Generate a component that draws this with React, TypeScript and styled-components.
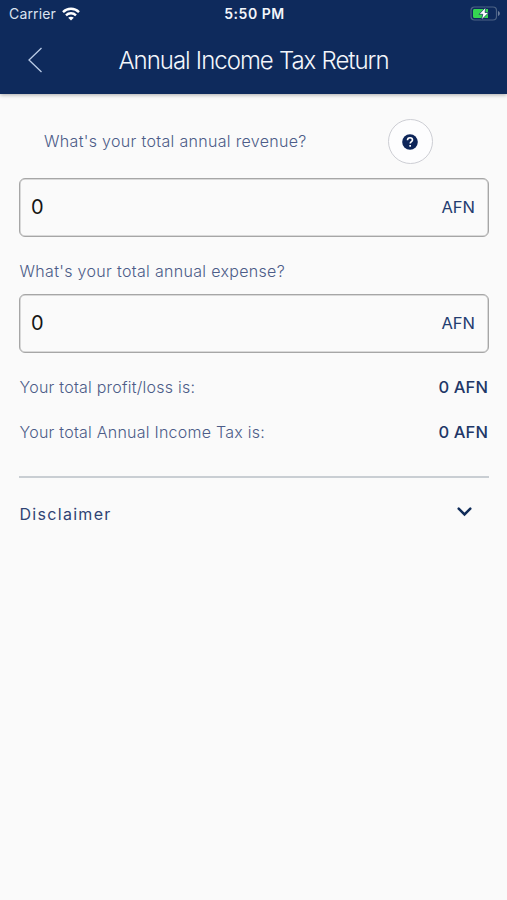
import React, { useState } from "react";
import styled, { createGlobalStyle } from "styled-components";

const GlobalStyle = createGlobalStyle`
  * { box-sizing: border-box; }
  body {
    margin: 0;
    background: #fafafa;
    font-family: Inter, "Liberation Sans", sans-serif;
  }
`;

const Screen = styled.div`
  display: flex;
  flex-direction: column;
  min-height: 900px;
  background: #fafafa;
  color: #4c5c88;
`;

const Header = styled.header`
  height: 94px;
  background: #0e2a5c;
  color: #f3f6fb;
  box-shadow: 0 1px 4px rgba(0, 0, 0, 0.32);
`;

const StatusBar = styled.div`
  display: grid;
  grid-template-columns: 1fr auto 1fr;
  align-items: center;
  height: 27px;
  padding: 0 7px 0 9px;
  font-size: 14px;
  line-height: 17px;
`;

const Carrier = styled.div`
  display: flex;
  align-items: center;
  gap: 6px;
  letter-spacing: 0.15px;
  color: #dbe3f0;
`;

const Clock = styled.div`
  font-weight: 600;
  letter-spacing: 0.55px;
`;

const BatterySlot = styled.div`
  display: flex;
  justify-content: flex-end;
`;

const NavBar = styled.div`
  display: grid;
  grid-template-columns: 72px 1fr 72px;
  align-items: center;
  height: 66px;
`;

const BackButton = styled.button`
  display: flex;
  padding: 0 0 0 27px;
  border: 0;
  background: none;
  color: #b9cbe6;
`;

const Title = styled.h1`
  margin: 0;
  padding-top: 2px;
  text-align: center;
  white-space: nowrap;
  font-size: 24px;
  line-height: 30px;
  font-weight: 300;
  letter-spacing: -1px;
  word-spacing: 0.4px;
`;

const Content = styled.main`
  display: flex;
  flex-direction: column;
  padding: 25px 18px 0 19px;
`;

const QuestionRow = styled.div`
  display: flex;
  align-items: center;
  justify-content: space-between;
  height: 45px;
  padding: 0 56px 0 25px;
  margin-bottom: 14px;
`;

const Label = styled.label`
  padding-bottom: 2px;
  font-size: 16px;
  line-height: 20px;
  font-weight: 300;
  letter-spacing: 0.32px;
  white-space: nowrap;
`;

const HelpButton = styled.button`
  display: flex;
  align-items: center;
  justify-content: center;
  width: 45px;
  height: 45px;
  padding: 0 1px 0 0;
  border: 1px solid #cdced4;
  border-radius: 50%;
  background: #fdfdfe;
`;

const Field = styled.div`
  display: flex;
  align-items: center;
  height: 59px;
  padding: 0 13px 2px 11px;
  border: 1px solid #a6a6a6;
  border-radius: 6px;
  box-shadow: inset 0 0 0 0.5px #b8b8b8;
`;

const AmountInput = styled.input`
  flex: 1;
  min-width: 0;
  padding: 0;
  border: 0;
  outline: 0;
  background: transparent;
  font-family: inherit;
  font-size: 20px;
  line-height: 24px;
  color: #151515;
`;

const Currency = styled.span`
  font-size: 16.5px;
  line-height: 20px;
  color: #233c70;
`;

const ExpenseLabel = styled(Label)`
  padding: 0 0 0 0.5px;
  margin: 24px 0 13px;
`;

const ResultRow = styled.div`
  display: flex;
  align-items: center;
  justify-content: space-between;
  height: 45px;
  padding: 0 1px 0 0.5px;
`;

const ResultLabel = styled.span`
  padding-bottom: 2px;
  font-size: 16px;
  line-height: 20px;
  font-weight: 300;
  letter-spacing: 0.24px;
  white-space: nowrap;
`;

const Results = styled.div`
  padding: 12px 0 21px;
  border-bottom: 2px solid #c9ced3;
`;

const ResultValue = styled.span`
  padding-bottom: 2px;
  font-size: 16.5px;
  line-height: 20px;
  font-weight: 500;
  letter-spacing: 0.1px;
  color: #213767;
`;

const Disclosure = styled.button`
  display: flex;
  align-items: center;
  justify-content: space-between;
  height: 71px;
  padding: 0 17px 0 0.5px;
  border: 0;
  background: none;
  font-family: inherit;
  font-size: 16px;
  letter-spacing: 1.3px;
  color: #2f4374;
`;

const WifiIcon = () => (
  <svg width="18" height="14" viewBox="0 0 18 14" fill="none" stroke="#fff" strokeWidth="2.4">
    <path d="M1 5.1C5.4.7 12.6.7 17 5.1" />
    <path d="M4 8.3c2.8-2.7 7.2-2.7 10 0" />
    <path d="M9 13.6 6.2 10.8c1.6-1.4 4-1.4 5.600 0Z" fill="#fff" stroke="none" />
  </svg>
);

const BatteryIcon = () => (
  <svg width="30" height="15" viewBox="0 0 30 15">
    <rect x="1" y="1" width="25.500" height="13" rx="3.500" fill="none" stroke="#4d6385" strokeWidth="1.200" />
    <path d="M28 5v5c1.300-.5 1.800-1.400 1.800-2.500S29.300 5.500 28 5Z" fill="#6d7f9c" />
    <path d="M4.500 3H18v9H4.500C3.600 12 3 11.400 3 10.500V4.500C3 3.600 3.600 3 4.500 3Z" fill="#35d551" />
    <path d="M15.800 1.200 9 8.300h3.800L11.400 14 18.800 6.500H15Z" fill="#fff" stroke="#0e2a5c" strokeWidth=".7" />
  </svg>
);

const BackIcon = () => (
  <svg width="16" height="26" viewBox="0 0 16 26" fill="none" stroke="currentColor" strokeWidth="1.300">
    <path d="M14.500 1 2 13l12.500 12" />
  </svg>
);

const HelpIcon = () => (
  <svg width="16" height="16" viewBox="0 0 16 16" fill="none">
    <circle cx="8" cy="8" r="7.800" fill="#0d2559" />
    <path d="M5.500 6.300C5.500 4.600 6.600 3.700 8 3.700s2.500.9 2.500 2.300c0 1.700-2.300 1.800-2.300 3.600" stroke="#fff" strokeWidth="1.600" />
    <rect x="7.300" y="11" width="1.700" height="1.700" fill="#fff" />
  </svg>
);

const ChevronDown = () => (
  <svg width="15" height="10" viewBox="0 0 15 10" fill="none" stroke="#102c59" strokeWidth="2.500" strokeLinecap="round">
    <path d="m1.700 1.700 5.800 5.800 5.800-5.800" />
  </svg>
);

const ChevronSlot = styled.span`
  display: flex;
  padding-bottom: 4px;
`;

export default function App() {
  const [revenue, setRevenue] = useState("0");
  const [expense, setExpense] = useState("0");
  return (
    <>
      <GlobalStyle />
      <Screen>
        <Header>
          <StatusBar>
            <Carrier>Carrier <WifiIcon /></Carrier>
            <Clock>5:50 PM</Clock>
            <BatterySlot><BatteryIcon /></BatterySlot>
          </StatusBar>
          <NavBar>
            <BackButton aria-label="Back"><BackIcon /></BackButton>
            <Title>Annual Income Tax Return</Title>
          </NavBar>
        </Header>
        <Content>
          <QuestionRow>
            <Label htmlFor="revenue">What's your total annual revenue?</Label>
            <HelpButton aria-label="Help"><HelpIcon /></HelpButton>
          </QuestionRow>
          <Field>
            <AmountInput id="revenue" value={revenue} onChange={(e) => setRevenue(e.target.value)} />
            <Currency>AFN</Currency>
          </Field>
          <ExpenseLabel htmlFor="expense">What's your total annual expense?</ExpenseLabel>
          <Field>
            <AmountInput id="expense" value={expense} onChange={(e) => setExpense(e.target.value)} />
            <Currency>AFN</Currency>
          </Field>
          <Results>
            <ResultRow>
              <ResultLabel>Your total profit/loss is:</ResultLabel>
              <ResultValue>0 AFN</ResultValue>
            </ResultRow>
            <ResultRow>
              <ResultLabel>Your total Annual Income Tax is:</ResultLabel>
              <ResultValue>0 AFN</ResultValue>
            </ResultRow>
          </Results>
          <Disclosure>
            Disclaimer
            <ChevronSlot><ChevronDown /></ChevronSlot>
          </Disclosure>
        </Content>
      </Screen>
    </>
  );
}
